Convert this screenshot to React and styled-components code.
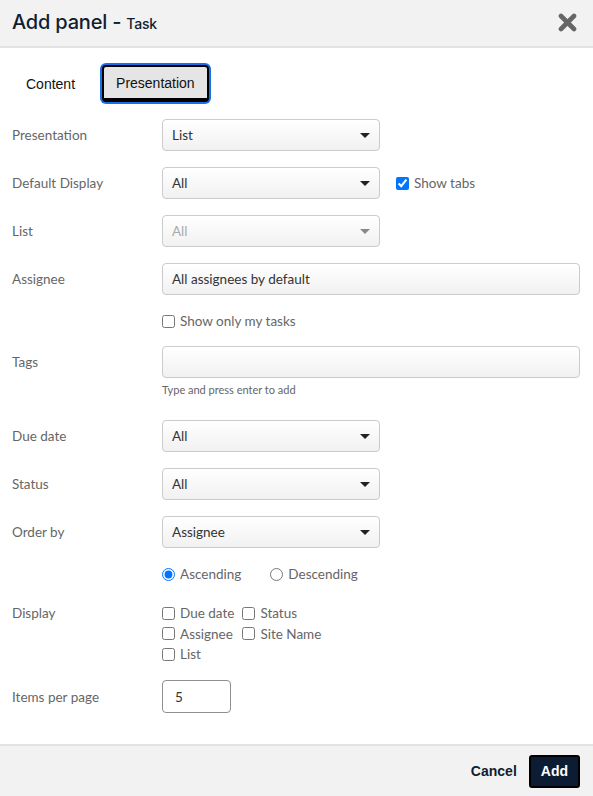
import React from "react";
import styled, { createGlobalStyle } from "styled-components";

const Global = createGlobalStyle`
  html, body { margin: 0; padding: 0; background: #fff; }
  body { font-family: Lato, "Open Sans", sans-serif; }
  * { box-sizing: border-box; }
`;

const Dialog = styled.div`
  width: 593px;
  height: 796px;
  display: flex;
  flex-direction: column;
  background: #fff;
`;

const Header = styled.header`
  height: 48px;
  flex: none;
  display: flex;
  align-items: center;
  justify-content: space-between;
  padding: 0 16px 2px 12px;
  background: #f2f2f2;
  border-bottom: 2px solid #e2e2e2;
`;

const Title = styled.h1`
  margin: 0;
  font-family: Inter, Roboto, sans-serif;
  font-size: 20px;
  font-weight: 500;
  color: #0f1e30;
  letter-spacing: -0.2px;
`;

const Sub = styled.span`
  font-size: 14px;
  font-weight: 500;
`;

const Close = styled.button`
  border: 0;
  background: none;
  padding: 0;
  width: 20px;
  height: 20px;
  display: flex;
  align-items: center;
  justify-content: center;
  cursor: pointer;
`;

const Body = styled.div`
  flex: 1;
  padding: 15px 13px 0 12px;
`;

const Tabs = styled.div`
  display: flex;
  align-items: center;
  gap: 11px;
  margin-bottom: 15px;
  height: 41px;
`;

const Tab = styled.button`
  font-family: "Liberation Sans", Arial, sans-serif;
  font-size: 14px;
  color: #111;
  height: 37px;
  padding: 0 ${(p) => (p.$active ? "12px" : "14px")};
  background: ${(p) => (p.$active ? "#e5e5e5" : "transparent")};
  border: ${(p) => (p.$active ? "2px solid #000" : "0")};
  border-bottom-width: ${(p) => (p.$active ? "4px" : "0")};
  border-radius: 4px;
  box-shadow: ${(p) => (p.$active ? "0 0 0 2px #1a6ee6" : "none")};
  margin-left: ${(p) => (p.$active ? "2px" : "0")};
  cursor: pointer;
`;

const Row = styled.div`
  display: grid;
  grid-template-columns: 150px 1fr;
  align-items: ${(p) => (p.$top ? "start" : "center")};
  margin-bottom: ${(p) => p.$mb ?? 16}px;
`;

const Label = styled.label`
  font-size: 13.5px;
  color: #666;
  line-height: 20px;
`;

const Line = styled.div`
  display: flex;
  align-items: center;
  gap: ${(p) => p.$gap ?? 16}px;
`;

const SelectBox = styled.div`
  width: ${(p) => p.$w ?? 218}px;
  height: 32px;
  display: flex;
  align-items: center;
  justify-content: space-between;
  padding: 0 9px 0 9px;
  border: 1px solid #cbcbcb;
  border-radius: 4px;
  background: linear-gradient(#ffffff, #f1f1f1);
  font-size: 13.5px;
  color: ${(p) => (p.$disabled ? "#aaa" : "#333")};
`;

const Caret = styled.span`
  width: 0;
  height: 0;
  border-left: 5px solid transparent;
  border-right: 5px solid transparent;
  border-top: 5px solid ${(p) => (p.$disabled ? "#888" : "#222")};
`;

const TextBox = styled.div`
  height: ${(p) => p.$h ?? 32}px;
  width: ${(p) => (p.$w ? `${p.$w}px` : "100%")};
  display: flex;
  align-items: center;
  padding: 0 ${(p) => p.$pad ?? 9}px;
  border: 1px solid ${(p) => p.$border ?? "#cbcbcb"};
  border-radius: 4px;
  background: ${(p) => p.$bg ?? "linear-gradient(#ffffff, #f1f1f1)"};
  font-size: 13.5px;
  color: #333;
`;

const Check = styled.label`
  display: inline-flex;
  align-items: center;
  gap: 4px;
  font-size: 13.5px;
  color: #666;
  line-height: 20px;
  white-space: nowrap;
  input {
    margin: 0 1px 0 0;
    width: 13px;
    height: 13px;
  }
`;

const Help = styled.div`
  font-size: 11px;
  color: #666;
  margin-top: 5px;
`;

const Grid = styled.div`
  display: grid;
  grid-template-columns: auto auto;
  justify-content: start;
  column-gap: 8px;
  row-gap: 0.5px;
`;

const Footer = styled.footer`
  height: 52px;
  flex: none;
  display: flex;
  align-items: center;
  justify-content: flex-end;
  gap: 12px;
  padding: 0 13px 0 0;
  background: #f2f2f2;
  border-top: 2px solid #e2e2e2;
`;

const Btn = styled.button`
  font-family: "Liberation Sans", Arial, sans-serif;
  font-weight: 700;
  font-size: 14px;
  height: 33px;
  padding: 0 ${(p) => (p.$primary ? "10px" : "0")};
  color: ${(p) => (p.$primary ? "#fff" : "#0f1e30")};
  background: ${(p) => (p.$primary ? "#0c1d33" : "transparent")};
  border: ${(p) => (p.$primary ? "2px solid #000" : "0")};
  border-radius: 3px;
  cursor: pointer;
`;

const Select = ({ value, disabled }) => (
  <SelectBox $disabled={disabled}>
    <span>{value}</span>
    <Caret $disabled={disabled} />
  </SelectBox>
);

export default function App() {
  return (
    <>
      <Global />
      <Dialog>
        <Header>
          <Title>
            Add panel - <Sub>Task</Sub>
          </Title>
          <Close aria-label="Close">
            <svg width="19" height="19" viewBox="0 0 19 19">
              <path d="M3 3 L16 16 M16 3 L3 16" stroke="#666" strokeWidth="4.6" strokeLinecap="round" />
            </svg>
          </Close>
        </Header>
        <Body>
          <Tabs>
            <Tab>Content</Tab>
            <Tab $active>Presentation</Tab>
          </Tabs>

          <Row>
            <Label>Presentation</Label>
            <Select value="List" />
          </Row>
          <Row>
            <Label>Default Display</Label>
            <Line>
              <Select value="All" />
              <Check>
                <input type="checkbox" defaultChecked />
                Show tabs
              </Check>
            </Line>
          </Row>
          <Row>
            <Label>List</Label>
            <Select value="All" disabled />
          </Row>
          <Row>
            <Label>Assignee</Label>
            <TextBox>All assignees by default</TextBox>
          </Row>
          <Row $mb={15}>
            <span />
            <Check>
              <input type="checkbox" />
              Show only my tasks
            </Check>
          </Row>
          <Row $mb={0}>
            <Label>Tags</Label>
            <TextBox />
          </Row>
          <Row $mb={24}>
            <span />
            <Help>Type and press enter to add</Help>
          </Row>
          <Row>
            <Label>Due date</Label>
            <Select value="All" />
          </Row>
          <Row>
            <Label>Status</Label>
            <Select value="All" />
          </Row>
          <Row>
            <Label>Order by</Label>
            <Select value="Assignee" />
          </Row>
          <Row $mb={19}>
            <span />
            <Line $gap={29}>
              <Check>
                <input type="radio" name="order" defaultChecked />
                Ascending
              </Check>
              <Check>
                <input type="radio" name="order" />
                Descending
              </Check>
            </Line>
          </Row>
          <Row $top $mb={16}>
            <Label>Display</Label>
            <Grid>
              <Check><input type="checkbox" />Due date</Check>
              <Check><input type="checkbox" />Status</Check>
              <Check><input type="checkbox" />Assignee</Check>
              <Check><input type="checkbox" />Site Name</Check>
              <Check><input type="checkbox" />List</Check>
            </Grid>
          </Row>
          <Row>
            <Label>Items per page</Label>
            <TextBox $w={69} $h={33} $pad={12} $border="#8f8f8f" $bg="#fff">5</TextBox>
          </Row>
        </Body>
        <Footer>
          <Btn>Cancel</Btn>
          <Btn $primary>Add</Btn>
        </Footer>
      </Dialog>
    </>
  );
}
